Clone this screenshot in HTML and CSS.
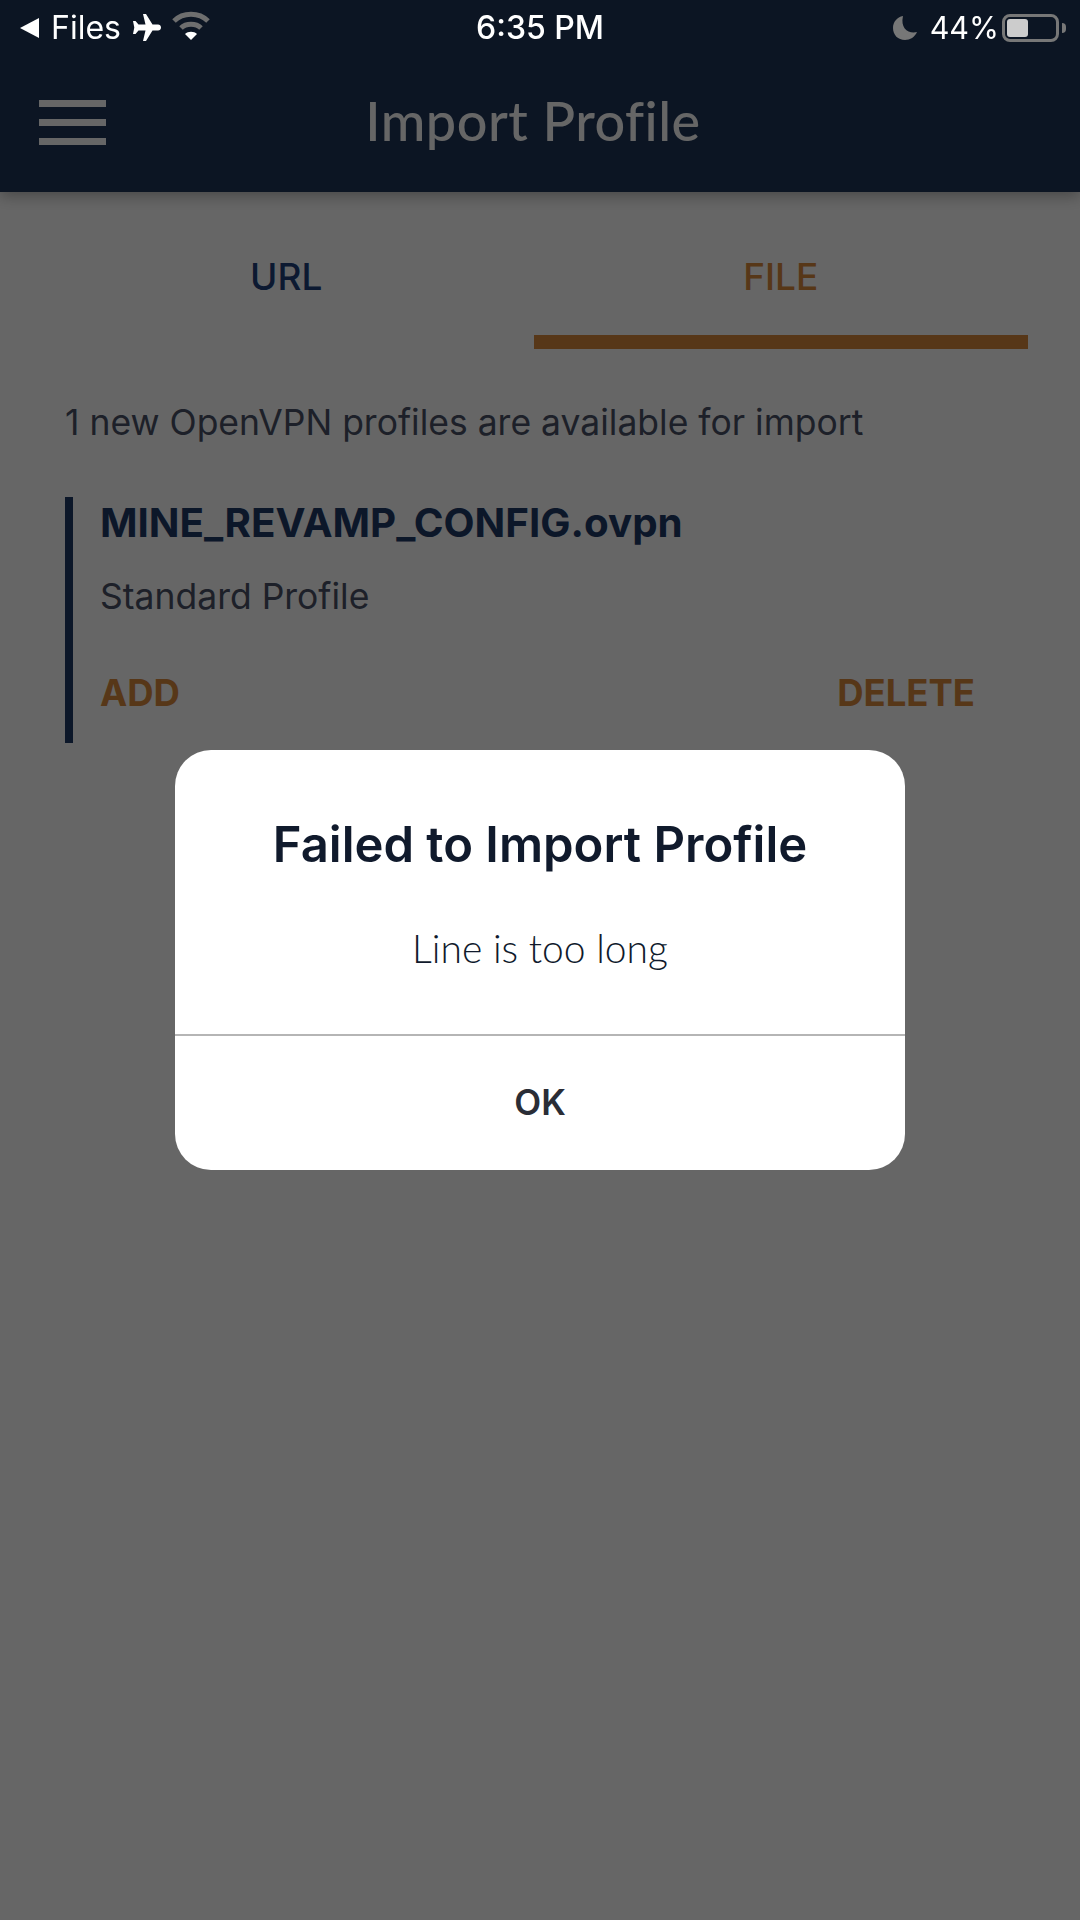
FILE: index.html
```html
<!DOCTYPE html>
<html lang="en">
<head>
  <meta charset="UTF-8" />
  <meta name="viewport" content="width=device-width, initial-scale=1.0"/>
  <title>Import Profile</title>
  <link rel="stylesheet" href="styles.css">
</head>
<body>
  <div class="status-bar">
    <div class="status-left">
      <svg class="back-icon" width="19" height="20" viewBox="0 0 19 20"><path d="M19 0V20L0 10Z" fill="#fff"/></svg>
      <span>Files</span>
      <svg class="plane-icon" width="29" height="27" viewBox="0 0 29 27"><path d="M11 0h3l6.500 10.500h5.500c1.700 0 3 1.300 3 3s-1.300 3-3 3h-5.500L14 27h-3l2.500-10.500H6.500L3.500 20H1l1.300-6.500L1 7h2.500l3 3.500h7z" fill="#fff"/></svg>
      <svg class="wifi-icon" width="38" height="29" viewBox="0 0 38 29"><g fill="none" stroke="#6e6e6e" stroke-width="5"><path d="M2 10C11 1 27 1 36 10"/><path d="M9 17C14 12 24 12 29 17"/></g><path d="M13 23C16 20 22 20 25 23L19 29Z" fill="#fff"/></svg>
    </div>
    <div class="status-time">6:35 PM</div>
    <div class="status-right">
      <svg class="moon-icon" width="24" height="24" viewBox="0 0 24 24"><path d="M10 0C4 1 0 6 0 12c0 7 5 12 12 12 5 0 10-3 12-8-8 2-17-3-14-16z" fill="#777"/></svg>
      <span>44%</span>
      <div class="battery">
        <div class="battery-fill"></div>
      </div>
      <div class="battery-nub"></div>
    </div>
  </div>

  <header class="app-header">
    <div class="menu-btn"><i></i><i></i><i></i></div>
    <h1>Import Profile</h1>
  </header>

  <div class="tabs">
    <div class="tab">URL</div>
    <div class="tab active">FILE</div>
  </div>

  <main class="content">
    <p class="count">1 new OpenVPN profiles are available for import</p>
    <div class="profile">
      <h3>MINE_REVAMP_CONFIG.ovpn</h3>
      <p>Standard Profile</p>
      <div class="profile-actions">
        <span>ADD</span>
        <span>DELETE</span>
      </div>
    </div>
  </main>

  <div class="overlay">
    <div class="dialog">
      <div class="dialog-body">
        <h2>Failed to Import Profile</h2>
        <p>Line is too long</p>
      </div>
      <div class="dialog-btn">OK</div>
    </div>
  </div>
</body>
</html>
```

FILE: styles.css
```css
* { box-sizing: border-box; margin:0; padding:0; }
html, body { height:100%; }
body {
  font-family: Inter, 'Noto Sans', sans-serif;
  background:#fff;
  color:#20407a;
  overflow:hidden;
}

/* status bar sits above the dimming layer */
.status-bar {
  position:relative; z-index:20;
  height:55px;
  display:grid; grid-template-columns:1fr auto 1fr;
  align-items:center;
  padding:0 14px;
  color:#fff;
  font-size:32px;
}
.status-left, .status-right { display:flex; align-items:center; }
.status-left { padding-left:6px; }
.status-left span { margin-left:12px; }
.plane-icon { margin-left:11px; }
.wifi-icon { margin-left:11px; margin-top:-5px; }
.status-time { font-weight:500; }
.status-right { justify-content:flex-end; }
.status-right span { font-size:30.500px; margin:0 3px 0 13px; }
.battery {
  width:57px; height:28px;
  border:3px solid #777; border-radius:8px;
  padding:2px;
}
.battery-fill { width:21px; height:100%; background:#ccc; border-radius:3px; }
.battery-nub { width:4px; height:10px; background:#777; border-radius:0 5px 5px 0; margin-left:3px; }

.app-header {
  margin-top:-55px;
  height:192px;
  background:#1f3559;
  display:grid; grid-template-columns:1fr auto 1fr;
  align-items:center;
  padding:55px 53px 0 39px;
  box-shadow:0 4px 14px rgba(0,0,0,0.3);
  position:relative; z-index:2;
}
.menu-btn { display:flex; flex-direction:column; gap:12px; width:67px; margin-top:-2px; }
.menu-btn i { display:block; height:7px; background:#fff; }
.app-header h1 {
  font-family: Lato, 'Open Sans', sans-serif;
  font-weight:500; font-size:54px; letter-spacing:0.5px;
  color:#fff; margin-top:-7px;
}

.tabs {
  display:grid; grid-template-columns:1fr 1fr;
  margin:0 52px 0 39px;
}
.tab {
  height:157px;
  padding-top:65px;
  text-align:center;
  font-size:37px; font-weight:500; line-height:40px;
  color:#20407a;
}
.tab.active { color:#d98a3d; border-bottom:14px solid #d98a3d; }

.content { padding:54px 0 0 65px; }
.count { font-size:35.500px; line-height:40px; color:#4a5266; }
.profile {
  margin:54px 105px 0 0;
  height:246px;
  border-left:8px solid #1f3a68;
  padding:4px 0 0 27px;
}
.profile h3 { font-size:40.300px; font-weight:700; line-height:44px; color:#1f3a68; }
.profile p { font-size:35.500px; line-height:40px; margin-top:32px; color:#4a5266; }
.profile-actions {
  display:flex; justify-content:space-between;
  margin-top:56px;
  font-size:36.500px; font-weight:700; line-height:40px;
  color:#d98a3d;
}

.overlay {
  position:fixed; inset:0; z-index:10;
  background:rgba(0,0,0,0.6);
  display:flex; align-items:center; justify-content:center;
}
.dialog {
  width:730px; height:420px;
  background:#fff; border-radius:36px;
  display:flex; flex-direction:column;
  text-align:center;
}
.dialog-body { height:286px; border-bottom:2px solid #b5b5b5; padding-top:67px; }
.dialog h2 { font-size:49px; font-weight:600; line-height:56px; color:#101a2c; }
.dialog p {
  font-family: Lato, 'Open Sans', sans-serif;
  font-weight:300;
  font-size:39px; line-height:44px; margin-top:53px; color:#101a2c;
}
.dialog-btn {
  flex:1; display:flex; align-items:center; justify-content:center;
  padding-bottom:2px;
  font-size:35px; font-weight:600; color:#2a2d36;
}
```
